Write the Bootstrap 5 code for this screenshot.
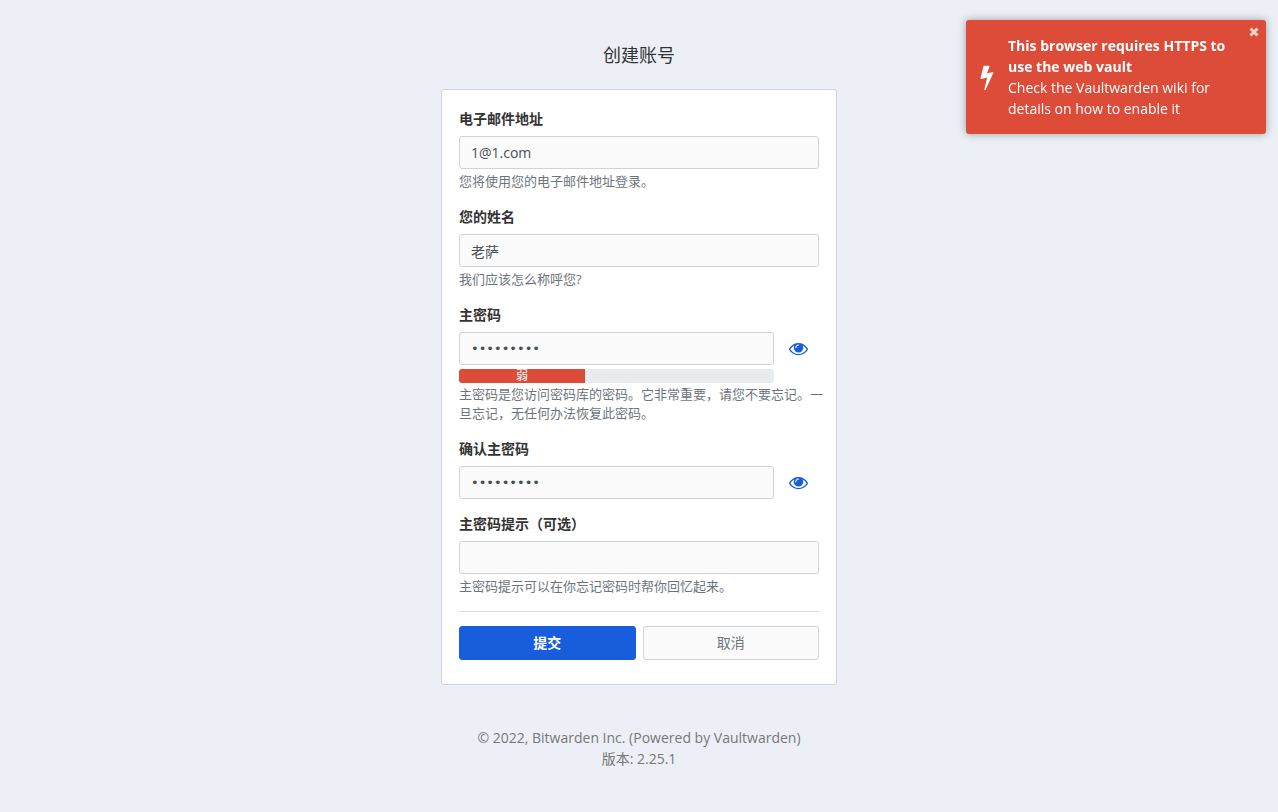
<!DOCTYPE html>
<html lang="zh-CN">
<head>
<meta charset="utf-8">
<meta name="viewport" content="width=device-width, initial-scale=1">
<title>创建账号 | Vaultwarden</title>
<link href="https://cdn.jsdelivr.net/npm/bootstrap@5.3.0/dist/css/bootstrap.min.css" rel="stylesheet">
<style>
  body {
    font: 14px/21px "Open Sans", "Noto Sans CJK SC", sans-serif;
    background: #ecf0f6;
    color: #333;
  }
  .register { max-width: 396px; padding-top: 43px; }
  .page-title { font-size: 18px; line-height: 24px; font-weight: 400; margin-bottom: 22px; }
  .card { border-color: #ced4da; border-radius: 3px; }
  .card-body { padding: 18px 17px 24px; color: #333; }
  .field { margin-bottom: 14px; }
  .form-label { display: block; font-weight: 600; margin-bottom: 7px; }
  .form-control, .form-control:focus {
    font-size: 14px; line-height: 21px; height: 33px; padding: 5px 11px;
    color: #465057; background: #fbfbfb; border-color: #ced4da; border-radius: 3px;
  }
  .form-control[type="password"] { font-family: "DejaVu Sans", sans-serif; font-size: 13px; }
  .form-text { font-size: 13px; line-height: 19px; margin: 3px -8px 15px 0; color: #6c757d; }
  .with-meter .form-text { margin-top: 2px; }
  .progress { height: 14px; margin-top: 4px; border-radius: 3px; background: #e9ecef; overflow: visible; }
  .progress-bar { font-size: 12px; line-height: 14px; background: #dd4b39; border-radius: 3px 0 0 3px; overflow: visible; }
  .eye-btn { width: 45px; height: 33px; padding: 0 0 0 4px; color: #175ddc; border: 0; }
  .rule { margin: 14px 0; border-color: #ccc; opacity: .7; }
  .actions { gap: 7px; }
  .actions .btn { font-size: 14px; line-height: 22px; padding: 5px 12px; border-radius: 3px; }
  .btn-submit, .btn-submit:hover { font-weight: 600; color: #fff; background: #175ddc; border-color: #175ddc; }
  .btn-cancel, .btn-cancel:hover { color: #6c757d; background: #fbfbfb; border-color: #ced4da; }
  footer { color: #777; padding: 42px 0; }
  .toast-area { top: 20px; right: 12px; }
  .toast {
    width: 300px; font-size: 14px; color: #fff; background: #dd4b39;
    border: 0; border-radius: 3px; box-shadow: 0 0 8px rgba(0, 0, 0, .35);
  }
  .toast-body { padding: 15px 32px 15px 8px; gap: 8px; }
  .toast-close { top: 7px; right: 7px; width: 10px; height: 10px; color: #f9d5c8; }
</style>
</head>
<body>
<svg class="d-none" aria-hidden="true">
  <symbol id="eye" viewBox="0 0 1792 1792"><path fill="currentColor" d="M1664 960q-152-236-381-353 61 104 61 225 0 185-131.500 316.500t-316.500 131.500-316.500-131.500-131.500-316.500q0-121 61-225-229 117-381 353 133 205 333.500 326.500t434.500 121.500 434.500-121.500 333.500-326.500zm-720-384q0-20-14-34t-34-14q-125 0-214.500 89.500t-89.500 214.500q0 20 14 34t34 14 34-14 14-34q0-86 61-147t147-61q20 0 34-14t14-34zm848 384q0 34-20 69-140 230-376.500 368.500t-499.500 138.500-499.500-139-376.500-368q-20-35-20-69t20-69q140-229 376.500-368t499.500-139 499.500 139 376.500 368q20 35 20 69z"/></symbol>
</svg>

<div class="toast-area position-fixed">
  <div class="toast show" role="alert">
    <div class="toast-body d-flex align-items-center">
      <svg class="flex-shrink-0" width="26" height="26" viewBox="0 0 1792 1792" aria-hidden="true"><path fill="currentColor" d="M1333 566q18 20 7 44l-540 1157q-13 25-42 25-4 0-14-2-17-5-25.500-19t-4.500-30l197-808-406 101q-4 1-12 1-18 0-31-11-18-15-13-39l201-825q4-14 16-23t28-9h328q19 0 32 12.500t13 29.500q0 8-5 18l-171 463 396-98q8-2 12-2 19 0 34 15z"/></svg>
      <div>
        <div class="fw-bold">This browser requires HTTPS to use the web vault</div>
        <div>Check the Vaultwarden wiki for details on how to enable it</div>
      </div>
    </div>
    <button type="button" class="toast-close btn p-0 border-0 position-absolute d-flex" data-bs-dismiss="toast" aria-label="Close">
      <svg width="10" height="10" viewBox="0 0 10 10"><path d="M1.500 1.500l7 7m0-7l-7 7" stroke="currentColor" stroke-width="3"/></svg>
    </button>
  </div>
</div>

<main class="register container-fluid px-0">
  <h1 class="page-title text-center">创建账号</h1>
  <form class="card">
    <div class="card-body">
      <div class="field">
        <label class="form-label" for="email">电子邮件地址</label>
        <input id="email" class="form-control" type="text" value="1@1.com">
        <div class="form-text">您将使用您的电子邮件地址登录。</div>
      </div>
      <div class="field">
        <label class="form-label" for="name">您的姓名</label>
        <input id="name" class="form-control" type="text" value="老萨">
        <div class="form-text">我们应该怎么称呼您?</div>
      </div>
      <div class="field with-meter">
        <label class="form-label" for="master">主密码</label>
        <div class="d-flex">
          <div class="flex-grow-1">
            <input id="master" class="form-control" type="password" value="123456789">
            <div class="progress" role="progressbar" aria-label="密码强度" aria-valuenow="40" aria-valuemin="0" aria-valuemax="100">
              <div class="progress-bar" style="width: 40%">弱</div>
            </div>
          </div>
          <button type="button" class="eye-btn btn d-flex align-items-center justify-content-center" aria-label="切换可见性"><svg width="19" height="19"><use href="#eye"/></svg></button>
        </div>
        <div class="form-text">主密码是您访问密码库的密码。它非常重要，请您不要忘记。一旦忘记，无任何办法恢复此密码。</div>
      </div>
      <div class="field">
        <label class="form-label" for="confirm">确认主密码</label>
        <div class="d-flex">
          <input id="confirm" class="form-control" type="password" value="123456789">
          <button type="button" class="eye-btn btn d-flex flex-shrink-0 align-items-center justify-content-center" aria-label="切换可见性"><svg width="19" height="19"><use href="#eye"/></svg></button>
        </div>
      </div>
      <div class="field">
        <label class="form-label" for="hint">主密码提示（可选）</label>
        <input id="hint" class="form-control" type="text">
        <div class="form-text">主密码提示可以在你忘记密码时帮你回忆起来。</div>
      </div>
      <hr class="rule">
      <div class="actions d-flex">
        <button type="submit" class="btn btn-submit w-100">提交</button>
        <button type="button" class="btn btn-cancel w-100">取消</button>
      </div>
    </div>
  </form>
  <footer class="text-center">
    <div>© 2022, Bitwarden Inc. (Powered by Vaultwarden)</div>
    <div>版本: 2.25.1</div>
  </footer>
</main>
<script src="https://cdn.jsdelivr.net/npm/bootstrap@5.3.0/dist/js/bootstrap.bundle.min.js"></script>
</body>
</html>
